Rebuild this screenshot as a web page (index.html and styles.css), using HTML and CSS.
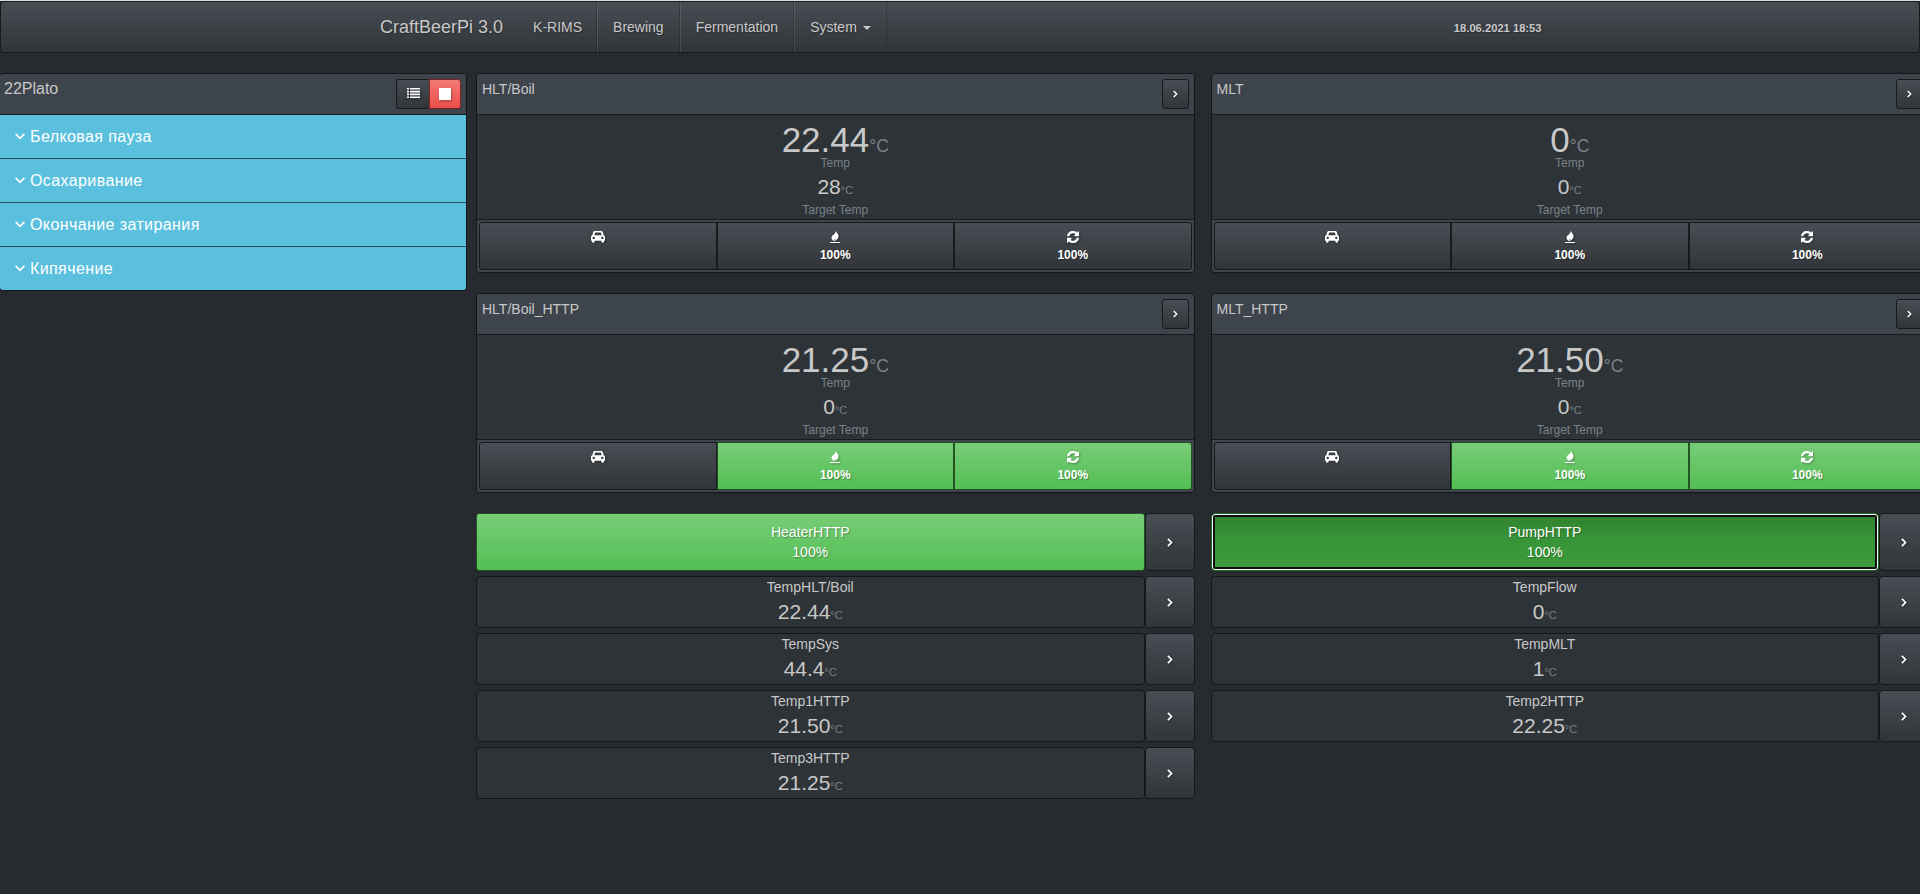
FILE: index.html
```html
<!DOCTYPE html>
<html lang="en">
<head>
<meta charset="utf-8">
<title>CraftBeerPi 3.0</title>
<link rel="stylesheet" href="styles.css">
</head>
<body>
<svg class="sprite" aria-hidden="true">
  <symbol id="car" viewBox="0 0 14 12"><path fill-rule="evenodd" d="M4 0h6c.9 0 1.6.5 1.9 1.4L12.700 4.300c.8.3 1.300 1 1.300 1.900v3c0 .3-.2.500-.5.500H13v.8a1.300 1.300 0 0 1-2.600 0v-.8H3.600v.8a1.300 1.300 0 0 1-2.600 0v-.8H.5A.5.5 0 0 1 0 9.200v-3c0-.9.500-1.600 1.300-1.900L2.100 1.400C2.400.5 3.100 0 4 0zM3.300 4.200h7.400L10 1.900c-.1-.2-.2-.3-.4-.3H4.400c-.2 0-.3.100-.4.300zM2.700 5.700a1.200 1.200 0 1 0 0 2.400 1.200 1.200 0 0 0 0-2.400zM11.300 5.700a1.200 1.200 0 1 0 0 2.400 1.200 1.200 0 0 0 0-2.400z"/></symbol>
  <symbol id="fire" viewBox="0 0 10 12"><path d="M0 11h10v1H0zM5.900 0c.3 1.100 1.200 1.900 1.900 2.900.6.800.8 1.600.7 2.400-.1 2-1.600 3.500-3.300 5 .3-1.300.2-2-.1-2.900-.4.700-.6 1.500-.5 2.900C2.700 9.500 1.500 8.300 1.500 6.700 1.600 4.500 3.900 4 4.800 2.500 5.300 1.700 5.600.9 5.900 0z"/></symbol>
  <symbol id="refresh" viewBox="0 128 1536 1536"><path stroke="currentColor" stroke-width="60" d="M1511 1056q0 5-1 7-64 268-268 434.500t-478 166.500q-146 0-282.500-55t-243.500-157l-129 129q-19 19-45 19t-45-19-19-45v-448q0-26 19-45t45-19h448q26 0 45 19t19 45-19 45l-137 137q71 66 161 102t187 36q134 0 250-65t186-179q11-17 53-117 8-23 30-23h192q13 0 22.500 9.500t9.500 22.500zm25-800v448q0 26-19 45t-45 19h-448q-26 0-45-19t-19-45 19-45l138-138q-148-137-349-137-134 0-250 65t-186 179q-11 17-53 117-8 23-30 23h-199q-13 0-22.500-9.500t-9.500-22.500v-7q65-268 270-434.500t480-166.500q146 0 284 55.500t245 156.500l130-129q19-19 45-19t45 19 19 45z"/></symbol>
  <symbol id="right" viewBox="0 0 6 9"><path fill="none" stroke="currentColor" stroke-width="1.700" d="M.9.9 4.500 4.500.9 8.100"/></symbol>
  <symbol id="down" viewBox="0 0 10 7"><path fill="none" stroke="currentColor" stroke-width="1.600" d="M.6.9 5 5.300 9.400.9"/></symbol>
  <symbol id="list" viewBox="0 0 13 10"><path d="M0 0h2v1.600H0zM3 0h10v1.600H3zM0 2.800h2v1.600H0zM3 2.800h10v1.600H3zM0 5.600h2v1.600H0zM3 5.600h10v1.600H3zM0 8.400h2V10H0zM3 8.400h10V10H3z"/></symbol>
  <symbol id="stop" viewBox="0 0 12 12"><rect width="12" height="12" rx=".6"/></symbol>
</svg>

<nav class="navbar">
  <a class="brand">CraftBeerPi 3.0</a>
  <a class="nav-link">K-RIMS</a>
  <a class="nav-link">Brewing</a>
  <a class="nav-link">Fermentation</a>
  <a class="nav-link">System <span class="caret"></span></a>
  <span class="clock">18.06.2021 18:53</span>
</nav>

<main class="dashboard">
  <section class="panel steps">
    <header class="panel-heading">
      <span class="steps-title">22Plato</span>
      <div class="btn-group">
        <button class="btn tool"><svg class="icon-list"><use href="#list"/></svg></button>
        <button class="btn danger tool"><svg class="icon-stop"><use href="#stop"/></svg></button>
      </div>
    </header>
    <div class="step"><svg class="icon-down"><use href="#down"/></svg>Белковая пауза</div>
    <div class="step"><svg class="icon-down"><use href="#down"/></svg>Осахаривание</div>
    <div class="step"><svg class="icon-down"><use href="#down"/></svg>Окончание затирания</div>
    <div class="step"><svg class="icon-down"><use href="#down"/></svg>Кипячение</div>
  </section>

  <div class="column">
    <section class="panel kettle">
      <header class="panel-heading"><span>HLT/Boil</span><button class="btn open"><svg class="icon-right"><use href="#right"/></svg></button></header>
      <div class="kettle-body">
        <div class="temp">22.44<small>°C</small></div><div class="label">Temp</div>
        <div class="target">28<small>°C</small></div><div class="label low">Target Temp</div>
      </div>
      <footer class="controls">
        <button class="btn"><svg class="icon-car"><use href="#car"/></svg></button>
        <button class="btn"><svg class="icon-fire"><use href="#fire"/></svg>100%</button>
        <button class="btn"><svg class="icon-refresh"><use href="#refresh"/></svg>100%</button>
      </footer>
    </section>
    <section class="panel kettle">
      <header class="panel-heading"><span>HLT/Boil_HTTP</span><button class="btn open"><svg class="icon-right"><use href="#right"/></svg></button></header>
      <div class="kettle-body">
        <div class="temp">21.25<small>°C</small></div><div class="label">Temp</div>
        <div class="target">0<small>°C</small></div><div class="label low">Target Temp</div>
      </div>
      <footer class="controls">
        <button class="btn"><svg class="icon-car"><use href="#car"/></svg></button>
        <button class="btn success"><svg class="icon-fire"><use href="#fire"/></svg>100%</button>
        <button class="btn success"><svg class="icon-refresh"><use href="#refresh"/></svg>100%</button>
      </footer>
    </section>
    <div class="row actor"><button class="btn success main">HeaterHTTP<br>100%</button><button class="btn more"><svg class="icon-right"><use href="#right"/></svg></button></div>
    <div class="row"><div class="sensor"><div>TempHLT/Boil</div><div class="value">22.44<small>°C</small></div></div><button class="btn more"><svg class="icon-right"><use href="#right"/></svg></button></div>
    <div class="row"><div class="sensor"><div>TempSys</div><div class="value">44.4<small>°C</small></div></div><button class="btn more"><svg class="icon-right"><use href="#right"/></svg></button></div>
    <div class="row"><div class="sensor"><div>Temp1HTTP</div><div class="value">21.50<small>°C</small></div></div><button class="btn more"><svg class="icon-right"><use href="#right"/></svg></button></div>
    <div class="row"><div class="sensor"><div>Temp3HTTP</div><div class="value">21.25<small>°C</small></div></div><button class="btn more"><svg class="icon-right"><use href="#right"/></svg></button></div>
  </div>

  <div class="column">
    <section class="panel kettle">
      <header class="panel-heading"><span>MLT</span><button class="btn open"><svg class="icon-right"><use href="#right"/></svg></button></header>
      <div class="kettle-body">
        <div class="temp">0<small>°C</small></div><div class="label">Temp</div>
        <div class="target">0<small>°C</small></div><div class="label low">Target Temp</div>
      </div>
      <footer class="controls">
        <button class="btn"><svg class="icon-car"><use href="#car"/></svg></button>
        <button class="btn"><svg class="icon-fire"><use href="#fire"/></svg>100%</button>
        <button class="btn"><svg class="icon-refresh"><use href="#refresh"/></svg>100%</button>
      </footer>
    </section>
    <section class="panel kettle">
      <header class="panel-heading"><span>MLT_HTTP</span><button class="btn open"><svg class="icon-right"><use href="#right"/></svg></button></header>
      <div class="kettle-body">
        <div class="temp">21.50<small>°C</small></div><div class="label">Temp</div>
        <div class="target">0<small>°C</small></div><div class="label low">Target Temp</div>
      </div>
      <footer class="controls">
        <button class="btn"><svg class="icon-car"><use href="#car"/></svg></button>
        <button class="btn success"><svg class="icon-fire"><use href="#fire"/></svg>100%</button>
        <button class="btn success"><svg class="icon-refresh"><use href="#refresh"/></svg>100%</button>
      </footer>
    </section>
    <div class="row actor"><button class="btn success main focused">PumpHTTP<br>100%</button><button class="btn more"><svg class="icon-right"><use href="#right"/></svg></button></div>
    <div class="row"><div class="sensor"><div>TempFlow</div><div class="value">0<small>°C</small></div></div><button class="btn more"><svg class="icon-right"><use href="#right"/></svg></button></div>
    <div class="row"><div class="sensor"><div>TempMLT</div><div class="value">1<small>°C</small></div></div><button class="btn more"><svg class="icon-right"><use href="#right"/></svg></button></div>
    <div class="row"><div class="sensor"><div>Temp2HTTP</div><div class="value">22.25<small>°C</small></div></div><button class="btn more"><svg class="icon-right"><use href="#right"/></svg></button></div>
  </div>
</main>
</body>
</html>
```
FILE: styles.css
```css
* { box-sizing: border-box; }
html { background: #272b30; }
body {
  margin: 0;
  height: 894px;
  overflow: hidden;
  border-top: 1px solid #d5e0dd;
  background: #272b30;
  color: #c8c8c8;
  font: 14px/20px "Liberation Sans", Arial, sans-serif;
}
.sprite { display: none; }
svg { display: block; fill: currentColor; flex: none; filter: drop-shadow(1px 1px 1px rgba(0,0,0,.3)); }

.navbar {
  display: flex;
  height: 52px;
  margin-bottom: 20px;
  padding-left: 364px;
  border: 1px solid #17191b;
  border-radius: 4px;
  background: linear-gradient(#484e55, #3a3f44 60%, #313539);
  text-shadow: 1px 1px 1px rgba(0,0,0,.3);
}
.brand { padding: 15px; font-size: 18px; }
.nav-link {
  display: flex;
  align-items: center;
  padding: 0 15px;
  border-left: 1px solid rgba(255,255,255,.1);
  border-right: 1px solid rgba(0,0,0,.2);
}
.brand + .nav-link { padding: 0 14px 0 15px; border-left: 0; }
.caret { margin-left: 6px; margin-top: 2px; border: 4px solid transparent; border-top-color: #c8c8c8; border-bottom: 0; }
.clock { margin-left: 567px; padding-top: 16px; font-size: 11.2px; font-weight: bold; }

.dashboard { display: flex; align-items: flex-start; width: 1931px; margin-left: -1px; }
.panel { border: 1px solid #141619; border-radius: 4px; background: #2e3338; box-shadow: 0 1px 1px rgba(0,0,0,.05); overflow: hidden; }
.panel-heading {
  display: flex;
  justify-content: space-between;
  align-items: flex-start;
  height: 41px;
  padding: 5px;
  border-bottom: 1px solid #17191b;
  background: #3e444c;
}
.steps { flex: none; width: 468px; margin-right: 9px; }
.steps-title { font-size: 16px; margin-left: -1px; }
.step {
  display: flex;
  align-items: center;
  height: 44px;
  padding: 0 15px;
  border-bottom: 1px solid #2a4d5a;
  background: #5bc0de;
  color: #fff;
  font-size: 16px;
  letter-spacing: .4px;
}
.step:last-child { height: 43px; border-bottom: 0; }
.icon-down { width: 10px; height: 7px; margin-right: 5px; filter: none; }

.btn {
  display: flex;
  align-items: center;
  justify-content: center;
  margin: 0;
  padding: 0;
  border: 1px solid #17191b;
  border-radius: 3px;
  background: linear-gradient(#484e55, #3a3f44 60%, #313539);
  color: #fff;
  font: inherit;
  text-shadow: 1px 1px 1px rgba(0,0,0,.3);
}
.success { border-color: #235323; background: linear-gradient(#78cc78, #62c462 60%, #53be53); }
.danger { border-color: #7c2320; background: linear-gradient(#f17a77, #ee5f5b 60%, #ec4d49); }
.btn-group { display: flex; }
.tool { height: 30px; }
.tool:first-child { border-radius: 3px 0 0 3px; border-right: 0; width: 33px; }
.tool:last-child { border-radius: 0 3px 3px 0; width: 32px; }
.icon-list { width: 13px; height: 10px; margin-top: -2px; }
.icon-stop { width: 12px; height: 12px; }
.open { width: 27px; height: 30px; }
.icon-right { width: 6px; height: 9px; }
.open .icon-right { width: 5px; height: 8px; }

.column { flex: none; width: 718.5px; margin-right: 16px; }
.kettle { height: 200px; margin-bottom: 20px; }
.kettle-body { height: 105px; border-bottom: 1px solid #17191b; text-align: center; padding-top: 7px; }
small { color: #7a8288; font-size: 50%; line-height: 0; }
.value small, .target small { font-size: 11px; }
.temp { font-size: 35px; line-height: 35px; }
.label { color: #7a8288; font-size: 12px; line-height: 12px; }
.target { margin-top: 7px; font-size: 21px; line-height: 22px; }
.low { margin-top: 6px; }
.controls { display: flex; height: 52px; padding: 2px; background: #3e444c; }
.controls .btn {
  flex: 1;
  flex-direction: column;
  justify-content: flex-start;
  padding-top: 8px;
  border-radius: 0;
  font-size: 12px;
  line-height: 18px;
  font-weight: bold;
}
.controls .btn:first-child { border-radius: 3px 0 0 3px; }
.controls .btn:last-child { border-radius: 0 3px 3px 0; }
.controls svg { height: 12px; margin-bottom: 3px; }
.icon-car { width: 14px; }
.icon-fire { width: 10px; }
.icon-refresh { width: 12px; }

.row { display: flex; height: 52px; margin-bottom: 5px; }
.actor { height: 58px; }
.main { flex: 1; }
.more { width: 50px; border-radius: 4px; }
.sensor { flex: 1; border: 1px solid #141619; border-radius: 4px; background: #2e3338; text-align: center; }
.value { margin-top: 2px; font-size: 21px; line-height: 26px; }
.focused {
  border-color: #1d6b1d;
  border-radius: 4px;
  background: linear-gradient(#30802f, #379337 40%, #3c9c3c);
  box-shadow: inset 0 0 0 1px #fff, inset 0 0 0 3px #101010;
}
```
